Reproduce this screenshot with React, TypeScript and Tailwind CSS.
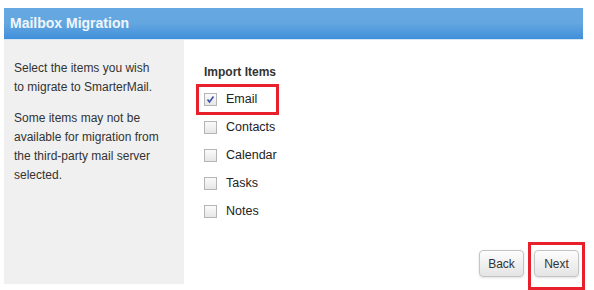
export default function App() {
  const items = [
    { name: 'Email', checked: true },
    { name: 'Contacts', checked: false },
    { name: 'Calendar', checked: false },
    { name: 'Tasks', checked: false },
    { name: 'Notes', checked: false },
  ];

  return (
    <div className="w-[594px] h-[290px] bg-white pt-[8px] pl-[4px] font-['Liberation_Sans',Arial,sans-serif]">
      <div className="w-[579px]">
        {/* Header */}
        <div className="h-[32px] flex items-center px-[6px] bg-gradient-to-b from-[#66a9e2] via-[#63a6e0] to-[#3f8fd9] border-b border-[#d6e6f5]">
          <span className="text-white/90 font-bold text-[14px]">Mailbox Migration</span>
        </div>

        <div className="flex h-[244px]">
          {/* Sidebar */}
          <div className="w-[180px] bg-[#f0f0f0] pl-[10px] pr-[12px] pt-[19px] text-[12px] leading-[19px] text-[#333]">
            <p>
              Select the items you wish
              <br />
              to migrate to SmarterMail.
            </p>
            <p className="mt-[12px]">
              Some items may not be
              <br />
              available for migration from
              <br />
              the third-party mail server
              <br />
              selected.
            </p>
          </div>

          {/* Content */}
          <div className="flex-1 flex flex-col pl-[20px] pt-[24px]">
            <div className="text-[12px] font-bold text-[#333] leading-[16px]">Import Items</div>
            <div className="mt-[5px] flex flex-col">
              {items.map((it) => (
                <div key={it.name} className="relative h-[28px] flex items-center">
                  {it.checked && (
                    <div className="absolute left-[-8px] top-[-1px] w-[83px] h-[31px] border-[3px] border-[#e8202b]" />
                  )}
                  <div className="w-[13px] h-[13px] border border-[#b5b5b5] bg-gradient-to-b from-[#fbfbfb] to-[#e6e6e6] flex items-center justify-center">
                    {it.checked && (
                      <svg width="9" height="9" viewBox="0 0 9 9">
                        <path d="M1.5 4.5 L3.5 7 L7.5 1.5" fill="none" stroke="#3a4fa8" strokeWidth="1.6" />
                      </svg>
                    )}
                  </div>
                  <span className="ml-[9px] text-[12.5px] text-[#222]">{it.name}</span>
                </div>
              ))}
            </div>

            <div className="mt-auto mb-[7px] flex justify-end gap-[10px] pr-[4px]">
              <button className="w-[45px] h-[27px] rounded-[4px] border border-[#c4c4c4] bg-gradient-to-b from-[#fdfdfd] to-[#e4e4e4] text-[12px] text-[#333] shadow-sm">
                Back
              </button>
              <div className="relative">
                <div className="absolute left-[-6px] top-[-8px] w-[57px] h-[48px] border-[3px] border-[#e8202b]" />
                <button className="w-[45px] h-[27px] rounded-[4px] border border-[#c4c4c4] bg-gradient-to-b from-[#fdfdfd] to-[#e4e4e4] text-[12px] text-[#333] shadow-sm">
                  Next
                </button>
              </div>
            </div>
          </div>
        </div>
      </div>
    </div>
  );
}
